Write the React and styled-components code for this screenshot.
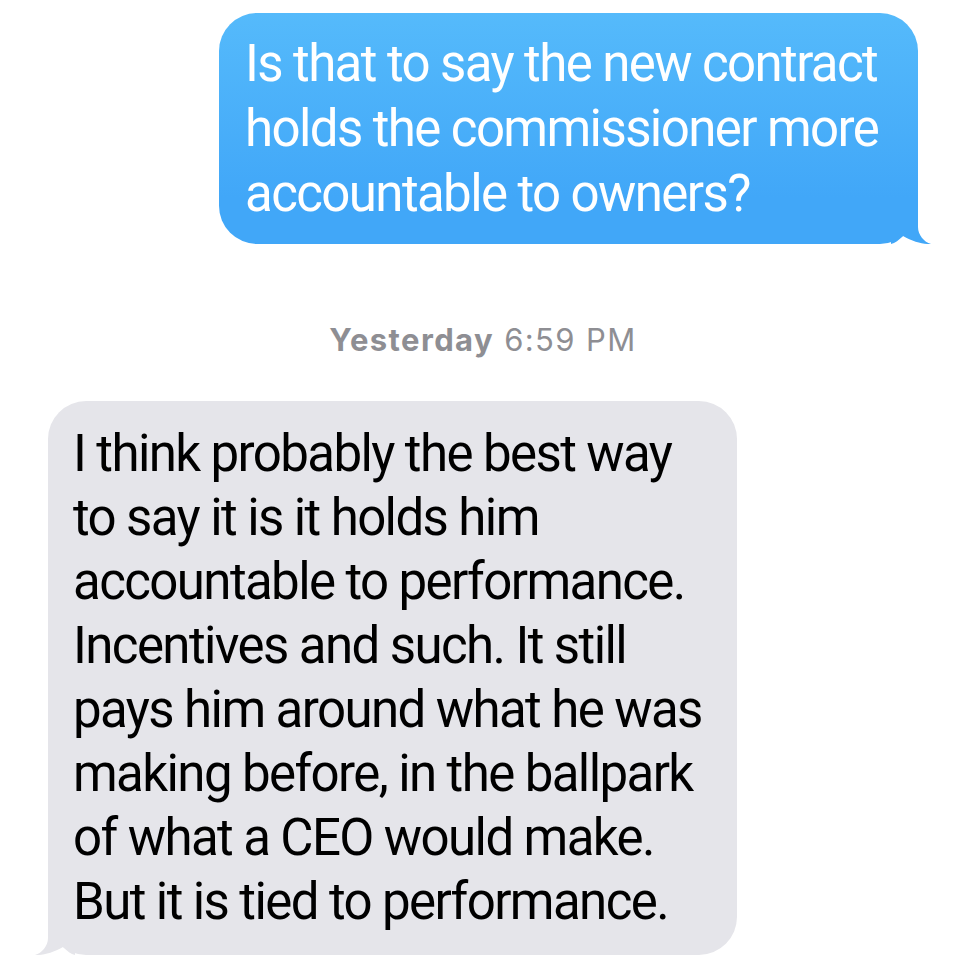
import React from "react";
import styled, { createGlobalStyle } from "styled-components";

const GlobalStyle = createGlobalStyle`
  html, body {
    margin: 0;
    padding: 0;
    background: #ffffff;
  }
  body {
    font-family: Roboto, "Liberation Sans", sans-serif;
  }
`;

/* ================= THREAD ================= */
const Thread = styled.div`
  width: 966px;
  height: 966px;
  box-sizing: border-box;
  padding: 13px 48px 0 48px;
  display: flex;
  flex-direction: column;
  overflow: hidden;
`;

/* ================= BUBBLE ================= */
const Bubble = styled.div`
  position: relative;
  align-self: ${({ $out }) => ($out ? "flex-end" : "flex-start")};
  width: ${({ $width }) => $width}px;
  box-sizing: border-box;
  border-radius: 38px;
  padding: ${({ $out }) => ($out ? "18px 16px 18px 26px" : "21px 16px 21px 25px")};
  background: ${({ $out }) =>
    $out
      ? "linear-gradient(180deg, #55bafb 0%, #41a7f8 80%, #41a7f8 100%)"
      : "#e5e5ea"};
  color: ${({ $out }) => ($out ? "#ffffff" : "#000000")};
  font-family: Roboto, "Liberation Sans", sans-serif;
  font-size: 51px;
  line-height: ${({ $out }) => ($out ? 65 : 64)}px;
  letter-spacing: -1.6px;
  white-space: nowrap;
`;

const Line = styled.span`
  display: block;
`;

const Tail = styled.svg`
  position: absolute;
  bottom: 0;
  width: 40px;
  height: 40px;
  ${({ $out }) => ($out ? "right: -13px;" : "left: -13px; transform: scaleX(-1);")}
`;

/* ================= TIMESTAMP ================= */
const Stamp = styled.div`
  margin: 71px 0 36px 0;
  text-align: center;
  font-family: Inter, Roboto, sans-serif;
  font-size: 31px;
  line-height: 50px;
  letter-spacing: 1.4px;
  color: #8e8e93;

  b {
    font-weight: 700;
  }
`;

const Message = ({ out, width, lines }) => (
  <Bubble $out={out} $width={width}>
    <Tail $out={out} viewBox="0 0 40 40">
      <path
        d="M27 0 L27 23 C27 31 33 38 40 40 C33 40.5 22 38 12 32 C8 36 4 39 0 40 L0 0 Z"
        fill={out ? "#41a7f8" : "#e5e5ea"}
      />
    </Tail>
    {lines.map((l) => (
      <Line key={l}>{l}</Line>
    ))}
  </Bubble>
);

export default function App() {
  return (
    <>
      <GlobalStyle />
      <Thread>
        <Message
          out
          width={699}
          lines={[
            "Is that to say the new contract",
            "holds the commissioner more",
            "accountable to owners?",
          ]}
        />
        <Stamp>
          <b>Yesterday</b> 6:59 PM
        </Stamp>
        <Message
          width={689}
          lines={[
            "I think probably the best way",
            "to say it is it holds him",
            "accountable to performance.",
            "Incentives and such. It still",
            "pays him around what he was",
            "making before, in the ballpark",
            "of what a CEO would make.",
            "But it is tied to performance.",
          ]}
        />
      </Thread>
    </>
  );
}
